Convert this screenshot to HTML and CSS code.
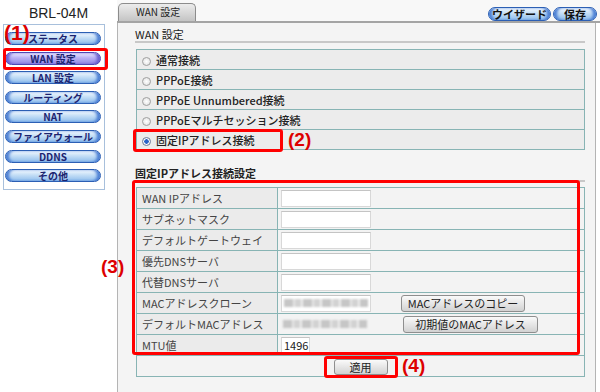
FILE: index.html
```html
<!DOCTYPE html>
<html lang="ja">
<head>
  <meta charset="UTF-8" />
  <title>BRL-04M WAN 設定</title>
  <link rel="stylesheet" href="styles.css">
</head>
<body>

<div class="page">
  <aside class="side">
    <div class="model">BRL-04M</div>
    <nav class="menu">
      <a class="pill">ステータス</a>
      <a class="pill active">WAN 設定</a>
      <a class="pill">LAN 設定</a>
      <a class="pill">ルーティング</a>
      <a class="pill">NAT</a>
      <a class="pill">ファイアウォール</a>
      <a class="pill">DDNS</a>
      <a class="pill">その他</a>
    </nav>
  </aside>

  <main class="main">
    <div class="topbar">
      <div class="tab">WAN 設定</div>
      <div class="tools">
        <a class="pill tool wide">ウイザード</a>
        <a class="pill tool">保存</a>
      </div>
    </div>

    <div class="panel">
      <h2 class="heading">WAN 設定</h2>
      <table class="grid radios">
        <tr><td><span class="radio"></span>通常接続</td></tr>
        <tr><td><span class="radio"></span>PPPoE接続</td></tr>
        <tr><td><span class="radio"></span>PPPoE Unnumbered接続</td></tr>
        <tr><td><span class="radio"></span>PPPoEマルチセッション接続</td></tr>
        <tr><td><span class="radio on"></span>固定IPアドレス接続</td></tr>
      </table>

      <h2 class="heading second">固定IPアドレス接続設定</h2>
      <table class="grid fields">
        <tr><th>WAN IPアドレス</th><td><span class="field"></span></td></tr>
        <tr><th>サブネットマスク</th><td><span class="field"></span></td></tr>
        <tr><th>デフォルトゲートウェイ</th><td><span class="field"></span></td></tr>
        <tr><th>優先DNSサーバ</th><td><span class="field"></span></td></tr>
        <tr><th>代替DNSサーバ</th><td><span class="field"></span></td></tr>
        <tr><th>MACアドレスクローン</th><td><div class="macrow"><span class="field masked"><span class="blur"></span></span><button class="btn copy">MACアドレスのコピー</button></div></td></tr>
        <tr><th>デフォルトMACアドレス</th><td><div class="macrow"><span class="blur plain"></span><button class="btn reset">初期値のMACアドレス</button></div></td></tr>
        <tr><th>MTU値</th><td><span class="field mtu">1496</span></td></tr>
        <tr class="submit"><td colspan="2"><button class="btn apply">適用</button></td></tr>
      </table>
    </div>
  </main>
</div>

<!-- annotation marks laid over the screenshot -->
<div class="mark box1"></div><div class="num n1">(1)</div>
<div class="mark box2"></div><div class="num n2">(2)</div>
<div class="mark box3"></div><div class="num n3">(3)</div>
<div class="mark box4"></div><div class="num n4">(4)</div>

</body>
</html>
```

FILE: styles.css
```css
body {
  margin: 0;
  background: #ffffff;
  font-family: "Noto Sans CJK JP", "Liberation Sans", sans-serif;
  font-size: 11px;
  color: #333;
  position: relative;
  height: 392px;
  overflow: hidden;
}
.page {
  display: flex;
  height: 392px;
}
.side {
  width: 117px;
  flex: none;
}
.model {
  font-family: "Liberation Sans", sans-serif;
  font-size: 14px;
  line-height: 16px;
  padding-top: 5px;
  margin-bottom: 3px;
  text-align: center;
  color: #222;
}
.menu {
  margin-left: 3px;
  width: 102px;
  height: 166px;
  box-sizing: border-box;
  border: 1px solid #a8c0dc;
  padding: 7px 0 0 1px;
  display: flex;
  flex-direction: column;
  gap: 6.6px;
}
.pill {
  display: block;
  height: 13px;
  width: 96px;
  box-sizing: border-box;
  border: 1px solid #2c5fb4;
  border-radius: 7px;
  background: linear-gradient(#f4faff, #c4def6 45%, #8fbdec);
  box-shadow: inset 4px 0 3px -1px #4a7ed4, inset -4px 0 3px -1px #4a7ed4;
  color: #1c2470;
  font-weight: bold;
  font-size: 10px;
  line-height: 11px;
  text-align: center;
}
.pill.active {
  border-color: #5046b4;
  background: linear-gradient(#eeeaff, #b8b0f4 45%, #9188e4);
  box-shadow: inset 4px 0 3px -1px #6a60d0, inset -4px 0 3px -1px #6a60d0;
}

.main {
  flex: 1;
  display: flex;
  flex-direction: column;
}
.topbar {
  height: 21px;
  display: flex;
  justify-content: space-between;
  align-items: flex-end;
  border-bottom: 2px solid #a4a4a4;
  background: #f8f8f8;
}
.tab {
  margin-left: 1px;
  width: 78px;
  height: 18px;
  box-sizing: border-box;
  border: 1px solid #8c8c8c;
  border-bottom: none;
  border-radius: 5px 5px 0 0;
  background: linear-gradient(#ececec, #c4c4c4);
  font-size: 10px;
  line-height: 16px;
  padding-left: 17px;
  color: #222;
}
.tools {
  display: flex;
  gap: 2px;
  margin-right: 3px;
}
.tool {
  width: 44px;
  height: 14px;
  font-size: 11px;
  line-height: 12px;
  color: #111;
}
.tool.wide {
  width: 63px;
}

.panel {
  flex: 1;
  margin-right: 4px;
  border-left: 1px solid #b4b4b4;
  border-right: 1px solid #b4b4b4;
  background: #f4f4f4;
  padding: 0 10px 0 17px;
}
.heading {
  margin: 0;
  padding-top: 4px;
  font-size: 11px;
  font-weight: normal;
  line-height: 14px;
  color: #222;
  border-bottom: 2px solid #c8c8c8;
}
.heading.second {
  margin-top: 12px;
  font-weight: bold;
}
.grid {
  width: 449px;
  border-collapse: collapse;
  margin-left: 1px;
}
.grid td, .grid th {
  border: 1px solid #88b4b4;
  padding: 0;
  line-height: 14px;
}
.radios {
  margin-top: 6px;
  background: #ececec;
}
.radios td {
  height: 19px;
  padding-left: 5px;
  color: #222;
  font-weight: 500;
}
.radio {
  display: inline-block;
  width: 9px;
  height: 9px;
  box-sizing: border-box;
  border: 1px solid #a0a0a0;
  border-radius: 50%;
  background: radial-gradient(#ffffff, #dcdcdc);
  vertical-align: -1px;
  margin-right: 5px;
}
.radio.on {
  background: radial-gradient(#2a64c8 0 2px, #ffffff 2.5px, #dcdcdc);
  border-color: #6a7a9a;
}

.fields {
  margin-top: 5px;
}
.fields th {
  width: 135px;
  height: 20px;
  background: #ebebeb;
  font-weight: normal;
  text-align: left;
  padding-left: 5px;
  color: #444;
}
.fields td {
  height: 20px;
  background: #f3f3f3;
  padding-left: 3px;
}
.field {
  display: block;
  width: 90px;
  height: 17px;
  box-sizing: border-box;
  background: #ffffff;
  border: 1px solid #d8d8d8;
  border-top-color: #c4c4c4;
  line-height: 15px;
  padding-left: 2px;
  color: #222;
}
.field.mtu {
  width: 29px;
}
.macrow {
  display: flex;
  align-items: center;
}
.field.masked {
  display: flex;
  align-items: center;
}
.blur {
  display: block;
  width: 84px;
  height: 8px;
  background: repeating-linear-gradient(90deg, #c6c6c6 0 9px, #e6e6e6 9px 11px, #d2d2d2 11px 17px, #efefef 17px 19px);
  filter: blur(0.8px);
}
.blur.plain {
  margin-left: 2px;
}
.btn {
  font-family: "Noto Sans CJK JP", "Liberation Sans", sans-serif;
  font-size: 11px;
  color: #222;
  height: 17px;
  padding: 0;
  border: 1px solid #8e8e8e;
  border-radius: 3px;
  background: linear-gradient(#fafafa, #e6e6e6 50%, #d2d2d2);
  line-height: 14px;
}
.copy {
  width: 124px;
  margin-left: 30px;
}
.reset {
  width: 135px;
  margin-left: 36px;
}
.submit td {
  height: 20px;
  text-align: center;
  padding: 0;
}
.apply {
  width: 54px;
  height: 16px;
  vertical-align: middle;
}

.mark {
  position: absolute;
  border: 3px solid #ff0000;
  border-radius: 3px;
  box-sizing: border-box;
}
.box1 { left: 3px; top: 48px; width: 105px; height: 22px; }
.box2 { left: 133px; top: 129px; width: 150px; height: 23px; }
.box3 { left: 132px; top: 180px; width: 448px; height: 175px; }
.box4 { left: 324px; top: 356px; width: 74px; height: 22px; }
.num {
  position: absolute;
  font-family: "Liberation Sans", sans-serif;
  font-weight: bold;
  font-size: 19px;
  color: #dd0000;
  line-height: 20px;
}
.n1 { left: 4px; top: 22px; font-size: 21px; line-height: 22px; }
.n2 { left: 288px; top: 130px; }
.n3 { left: 101px; top: 257px; }
.n4 { left: 402px; top: 356px; }
```
